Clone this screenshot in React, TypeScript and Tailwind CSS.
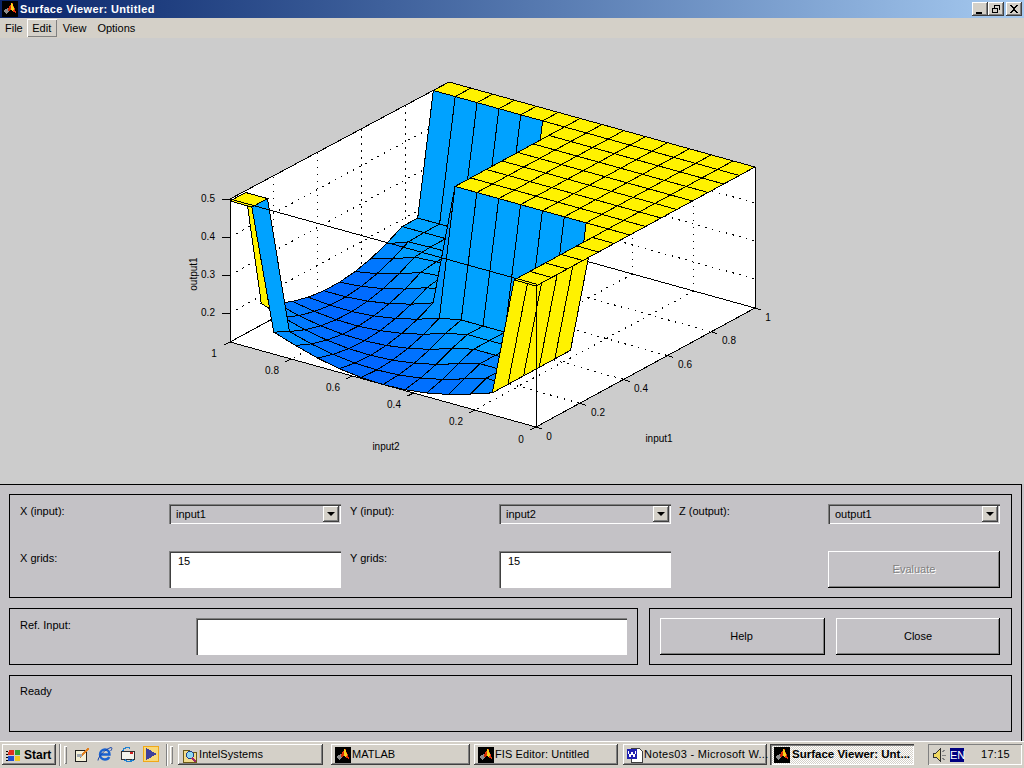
import { type ReactNode } from "react";

const raised = "shadow-[inset_-1px_-1px_0_#000,inset_1px_1px_0_#fff,inset_-2px_-2px_0_#808080]";
const sunken = "shadow-[inset_1px_1px_0_#808080,inset_2px_2px_0_#404040,inset_-1px_-1px_0_#fff]";
const taskRaised = "shadow-[inset_-1px_-1px_0_#404040,inset_1px_1px_0_#fff,inset_-2px_-2px_0_#808080]";

const BOX_TOP = 143;
const SURFACE_TOP = 141;

function point(i: number, j: number, h: number) {
  return [536 + (219 * i) / 14 - (306 * j) / 14, 427 - (119 * i) / 14 - (85 * j) / 14 - h];
}

function isHigh(i: number, j: number) {
  return i >= 13 || j <= 1 || (i >= 6 && j <= 8) || (i <= 1 && j >= 13);
}

function height(i: number, j: number) {
  if (isHigh(i, j)) return SURFACE_TOP;
  const d = j - 7 - 1.08 * i;
  return Math.min(22, 0.92 * d * d);
}

function cellColor(i: number, j: number) {
  if (isHigh(i, j)) return "#fff200";
  let t = height(i, j) / 22;
  // the corner near the yellow wall stays dark in the reference
  if (i <= 2 && j <= 4) t *= 0.5;
  return `rgb(0,${Math.round(102 + t * 60)},255)`;
}

function Surface() {
  const cells: ReactNode[] = [];
  for (let i = 13; i >= 0; i--) {
    for (let j = 13; j >= 0; j--) {
      const pts = [
        point(i, j, height(i, j)),
        point(i + 1, j, height(i + 1, j)),
        point(i + 1, j + 1, height(i + 1, j + 1)),
        point(i, j + 1, height(i, j + 1)),
      ];
      cells.push(
        <polygon
          key={`${i}-${j}`}
          points={pts.map((p) => p.join(",")).join(" ")}
          fill={cellColor(i, j)}
          stroke="#000"
          strokeWidth={1}
        />
      );
    }
  }
  return <g>{cells}</g>;
}

function Dotted({ x1, y1, x2, y2 }: { x1: number; y1: number; x2: number; y2: number }) {
  return <line x1={x1} y1={y1} x2={x2} y2={y2} stroke="#000" strokeWidth={1.2} strokeDasharray="1.5 5.5" />;
}

function Plot() {
  const fractions = [0.2, 0.4, 0.6, 0.8];
  const heights = [29, 67, 105];
  const uv = (u: number, v: number) => point(u * 14, v * 14, 0);
  const labels: [string, number, number][] = [
    ["0.5", 208, 202],
    ["0.4", 208, 240],
    ["0.3", 208, 278],
    ["0.2", 208, 316],
    ["1", 214, 357],
    ["0.8", 272, 374],
    ["0.6", 333, 391],
    ["0.4", 394, 408],
    ["0.2", 456, 425],
    ["0", 521, 443],
    ["0", 549, 440],
    ["0.2", 598, 416],
    ["0.4", 641, 392],
    ["0.6", 685, 368],
    ["0.8", 729, 344],
    ["1", 768, 321],
    ["input2", 386, 450],
    ["input1", 659, 442],
  ];
  return (
    <svg viewBox="0 38 1024 446" className="block w-[1024px] h-[446px]">
      <g shapeRendering="crispEdges">
        <polygon points="230,199 449,82 755,167 755,308 536,427 230,342" fill="#fff" />
        {fractions.map((f) => {
          const [ax, ay] = uv(f, 1);
          const [bx, by] = uv(1, f);
          const [cx, cy] = uv(f, 0);
          const [dx, dy] = uv(0, f);
          return (
            <g key={f}>
              <Dotted x1={ax} y1={ay} x2={ax} y2={ay - BOX_TOP} />
              <Dotted x1={bx} y1={by} x2={bx} y2={by - SURFACE_TOP} />
              <Dotted x1={ax} y1={ay} x2={cx} y2={cy} />
              <Dotted x1={bx} y1={by} x2={dx} y2={dy} />
            </g>
          );
        })}
        {heights.map((h) => (
          <g key={h}>
            <Dotted x1={230} y1={342 - h} x2={449} y2={223 - h} />
            <Dotted x1={449} y1={223 - h} x2={755} y2={308 - h} />
          </g>
        ))}
        <g fill="none" stroke="#000">
          <path d="M230 199L449 82L755 167V308M230 199V342L449 223L755 308L536 427L230 342M449 82V223" />
        </g>
        <Surface />
        <g fill="none" stroke="#000">
          <path d="M230 199L536 284V427M536 286L755 167" />
          {[199, 237, 275, 313].map((y) => (
            <path key={y} d={`M222 ${y}H230`} />
          ))}
          {[0, 0.2, 0.4, 0.6, 0.8, 1].map((f) => {
            const [vx, vy] = uv(0, f);
            const [ux, uy] = uv(f, 0);
            return (
              <g key={f}>
                <path d={`M${vx} ${vy}l-6 3`} />
                <path d={`M${ux} ${uy}l6 2`} />
              </g>
            );
          })}
        </g>
      </g>
      <g fontFamily="Liberation Sans, Arial, sans-serif" fontSize={10} fill="#000" textAnchor="middle">
        {labels.map(([text, x, y]) => (
          <text key={`${text}-${x}`} x={x} y={y}>
            {text}
          </text>
        ))}
        <text x={0} y={0} transform="translate(197 274) rotate(-90)">
          output1
        </text>
      </g>
    </svg>
  );
}

function MatlabIcon() {
  return (
    <svg viewBox="0 0 16 16" className="w-4 h-4 shrink-0" shapeRendering="crispEdges">
      <rect width="16" height="16" fill="#000" />
      <polygon points="1,10 6,7 8,10 4,13" fill="#8c8c8c" />
      <polygon points="6,8 10,1 13,8 15,14 12,11 9,9" fill="#e8350a" />
      <polygon points="9,3 10,1 12,7 11,11 9,8" fill="#f6d21a" />
      <polygon points="6,8 9,6 7,11" fill="#c42a0a" />
    </svg>
  );
}

function WinButton({ children }: { children: ReactNode }) {
  return (
    <div className={`w-4 h-[14px] bg-[#d4d0c8] flex items-center justify-center ${taskRaised}`}>
      <svg viewBox="0 0 16 14" className="w-4 h-[14px]" shapeRendering="crispEdges">
        {children}
      </svg>
    </div>
  );
}

function TitleBar() {
  return (
    <div className="h-[18px] flex items-center bg-gradient-to-r from-[#0a246a] to-[#a6caf0]">
      <div className="ml-[2px] mr-[2px]">
        <MatlabIcon />
      </div>
      <span className="text-white font-bold text-[11px] tracking-[0.35px] leading-[18px]">Surface Viewer: Untitled</span>
      <div className="ml-auto mr-[2px] flex">
        <WinButton>
          <path d="M4 10h6v2H4z" fill="#000" />
        </WinButton>
        <WinButton>
          <path d="M6 3h6v1h-6zM6 4h1v2H6zM11 4h1v4h-1zM4 6h6v1H4zM4 7h1v4H4zM9 7h1v4H9zM4 10h6v1H4z" fill="#000" />
        </WinButton>
        <div className="w-[2px]" />
        <WinButton>
          <path d="M4 3h2v1h1v1h2V4h1V3h2v1h-1v1h-1v1h-1v2h1v1h1v1h1v1h-2v-1H9V9H7v1H6v1H4v-1h1V9h1V8h1V6H6V5H5V4H4z" fill="#000" />
        </WinButton>
      </div>
    </div>
  );
}

function MenuBar() {
  return (
    <div className="h-5 bg-[#d4d0c8] flex items-center text-[11px] text-black">
      <span className="ml-[5px]">File</span>
      <span className="ml-[4px] w-[30px] h-[18px] flex items-center justify-center shadow-[inset_1px_1px_0_#fff,inset_-1px_-1px_0_#808080]">
        Edit
      </span>
      <span className="ml-[6px]">View</span>
      <span className="ml-[11px]">Options</span>
    </div>
  );
}

function Label({ width, children }: { width: string; children: ReactNode }) {
  return <span className={`${width} shrink-0 pt-[1px] text-[11px] leading-[13px]`}>{children}</span>;
}

function Select({ value }: { value: string }) {
  return (
    <div className={`relative w-[172px] h-5 bg-[#c4c2c6] flex items-center pl-[7px] pt-[1px] text-[11px] ${sunken}`}>
      {value}
      <div className={`absolute right-[2px] top-[2px] w-4 h-4 bg-[#d4d0c8] flex items-center justify-center ${taskRaised}`}>
        <div className="w-0 h-0 border-x-4 border-t-4 border-x-transparent border-t-black" />
      </div>
    </div>
  );
}

function EditBox({ className, value }: { className: string; value?: string }) {
  return (
    <div className={`h-[37px] bg-white pl-[9px] pt-[4px] text-[11px] leading-[13px] ${sunken} ${className}`}>{value}</div>
  );
}

function PushButton({ className, children }: { className: string; children: ReactNode }) {
  return (
    <div className={`h-[37px] flex items-center justify-center text-[11px] ${raised} ${className}`}>{children}</div>
  );
}

function ControlPanel() {
  return (
    <div className="h-[257px] bg-[#c4c2c6] text-black">
      <div className="w-[1022px] h-full border-t border-r border-black pt-[9px] pl-[9px] pr-[9px] flex flex-col gap-[10px]">
        <div className="h-[104px] border border-black pt-[9px] pl-[10px]">
          <div className="flex">
            <Label width="w-[149px]">X (input):</Label>
            <Select value="input1" />
            <Label width="ml-[9px] w-[149px]">Y (input):</Label>
            <Select value="input2" />
            <Label width="ml-[8px] w-[149px]">Z (output):</Label>
            <Select value="output1" />
          </div>
          <div className="flex mt-[27px]">
            <Label width="w-[149px]">X grids:</Label>
            <EditBox className="w-[172px]" value="15" />
            <Label width="ml-[9px] w-[149px]">Y grids:</Label>
            <EditBox className="w-[172px]" value="15" />
            <div className="ml-[157px]">
              <PushButton className="w-[172px] text-[#808080] [text-shadow:1px_1px_0_#fff]">Evaluate</PushButton>
            </div>
          </div>
        </div>
        <div className="flex gap-[11px] h-[57px]">
          <div className="w-[629px] border border-black pt-[9px] pl-[10px] flex">
            <Label width="w-[176px]">Ref. Input:</Label>
            <EditBox className="w-[431px]" />
          </div>
          <div className="flex-1 border border-black pt-[9px] pl-[10px] flex gap-[11px]">
            <PushButton className="w-[165px] pr-[2px]">Help</PushButton>
            <PushButton className="w-[164px]">Close</PushButton>
          </div>
        </div>
        <div className="h-[57px] border border-black pt-[9px] pl-[10px] text-[11px] leading-[13px]">Ready</div>
      </div>
    </div>
  );
}

function FolderIcon() {
  return (
    <svg viewBox="0 0 16 16" className="w-4 h-4 shrink-0" shapeRendering="crispEdges">
      <path d="M1 3h6l1 2h6v10H1z" fill="#f2dc8c" stroke="#6b5a18" />
      <circle cx="8" cy="8" r="3.5" fill="#8fd8f0" stroke="#1a3f8c" />
      <path d="M10 11l4 4" stroke="#a02a6a" strokeWidth="2" />
    </svg>
  );
}

function WordIcon() {
  return (
    <svg viewBox="0 0 16 16" className="w-4 h-4 shrink-0" shapeRendering="crispEdges">
      <path d="M4 1h8l3 3v11H4z" fill="#fff" stroke="#404040" />
      <rect x="0" y="2" width="10" height="10" fill="#1f1fb0" />
      <path d="M1 4l2 6 2-5 2 5 2-6" fill="none" stroke="#fff" />
    </svg>
  );
}

function TaskButton({ className, icon, children }: { className: string; icon: ReactNode; children: ReactNode }) {
  return (
    <div className={`h-[21px] bg-[#d4d0c8] flex items-center pl-[4px] gap-[1px] text-[11px] whitespace-nowrap ${taskRaised} ${className}`}>
      {icon}
      {children}
    </div>
  );
}

function Handle({ className }: { className: string }) {
  return <div className={`w-[3px] h-[18px] shadow-[inset_1px_1px_0_#fff,inset_-1px_-1px_0_#808080] ${className}`} />;
}

function Divider({ className }: { className: string }) {
  return <div className={`w-[2px] h-[22px] shadow-[inset_1px_0_0_#808080,inset_-1px_0_0_#fff] ${className}`} />;
}

function QuickLaunch() {
  return (
    <div className="flex items-center gap-[7px]">
      <svg viewBox="0 0 16 16" className="w-4 h-4" shapeRendering="crispEdges">
        <rect x="1" y="4" width="11" height="11" fill="#f4f0d8" stroke="#202020" />
        <path d="M5 11L14 1l1 2-8 9z" fill="#e08020" />
        <path d="M3 8h5v3H3z" fill="#a0a8b0" />
      </svg>
      <svg viewBox="0 0 16 16" className="w-4 h-4">
        <path d="M3 8.5h9.5C12.5 5.5 10.5 3.5 8 3.5S3 5.5 3 8.5s2.2 5 5 5c2 0 3.5-1 4.2-2.5" fill="none" stroke="#1a62d0" strokeWidth="2.4" />
        <path d="M1 14.5C1 11 8 3 14 1.5c1.5 0 1 2-.5 3.5" fill="none" stroke="#1844a8" strokeWidth="1" />
      </svg>
      <svg viewBox="0 0 16 16" className="w-4 h-4" shapeRendering="crispEdges">
        <rect x="1" y="5" width="13" height="8" fill="#f4f4ec" stroke="#303030" />
        <rect x="10" y="6" width="3" height="2" fill="#d02020" />
        <path d="M3 5c0-3 4-4 7-3M13 14c-2 2-6 2-8 0" fill="none" stroke="#2080d0" strokeWidth="1.5" />
      </svg>
      <svg viewBox="0 0 16 16" className="w-4 h-4" shapeRendering="crispEdges">
        <rect width="16" height="16" fill="#f0a818" />
        <rect x="1" y="1" width="14" height="14" fill="#f8d878" />
        <polygon points="3,2 14,8 3,14" fill="#40409c" />
      </svg>
    </div>
  );
}

function TaskBar() {
  return (
    <div className="h-[27px] bg-[#d4d0c8] border-t border-white pt-[2px] flex items-start text-black">
      <div className={`ml-[2px] w-[54px] h-[21px] flex items-center pl-[4px] gap-[2px] text-[12px] font-bold ${taskRaised}`}>
        <svg viewBox="0 0 16 16" className="w-4 h-4 shrink-0" shapeRendering="crispEdges">
          <path d="M3 3h5v5H2z" fill="#e03020" />
          <path d="M9 3h5v5H9z" fill="#30a030" />
          <path d="M2 9h6v5H2z" fill="#2050d0" />
          <path d="M9 9h5v5H9z" fill="#f0c820" />
          <path d="M0 4h2M0 7h2M0 10h2M0 13h2" stroke="#000" />
        </svg>
        Start
      </div>
      <Divider className="ml-[3px]" />
      <Handle className="ml-[3px] mt-[2px]" />
      <div className="ml-[7px] mt-[2px]">
        <QuickLaunch />
      </div>
      <Divider className="ml-[7px]" />
      <Handle className="ml-[2px] mt-[2px]" />
      <TaskButton className="ml-[5px] w-[145px] tracking-[0.1px]" icon={<FolderIcon />}>IntelSystems</TaskButton>
      <TaskButton className="ml-[8px] w-[139px]" icon={<MatlabIcon />}>MATLAB</TaskButton>
      <TaskButton className="ml-[4px] w-[144px] tracking-[0.1px]" icon={<MatlabIcon />}>FIS Editor: Untitled</TaskButton>
      <TaskButton className="ml-[5px] w-[144px] tracking-[0.3px]" icon={<WordIcon />}>Notes03 - Microsoft W...</TaskButton>
      <div className="ml-[3px] w-[144px] h-[21px] flex items-center pl-[4px] gap-[2px] text-[11.5px] font-bold whitespace-nowrap bg-[repeating-conic-gradient(#fff_0_25%,#d4d0c8_0_50%)] bg-[length:2px_2px] shadow-[inset_1px_1px_0_#404040,inset_2px_2px_0_#808080,inset_-1px_-1px_0_#fff]">
        <MatlabIcon />
        Surface Viewer: Unt...
      </div>
      <div className="ml-[14px] w-[94px] h-[21px] flex items-center pl-[4px] text-[11px] shadow-[inset_1px_1px_0_#808080,inset_-1px_-1px_0_#fff]">
        <svg viewBox="0 0 16 16" className="w-4 h-4 shrink-0" shapeRendering="crispEdges">
          <path d="M1 6h3l4-4v12l-4-4H1z" fill="#f0d860" stroke="#303030" />
          <path d="M10 8h4M10 5l3-2M10 11l3 2" stroke="#808080" />
        </svg>
        <span className="ml-[2px] w-[14px] h-[14px] bg-[#000080] text-white leading-[14px] text-center">EN</span>
        <span className="ml-[17px] tracking-[0.3px]">17:15</span>
      </div>
    </div>
  );
}

export default function App() {
  return (
    <div className="w-[1024px] h-[768px] overflow-hidden flex flex-col font-['Liberation_Sans',Arial,sans-serif]">
      <TitleBar />
      <MenuBar />
      <div className="h-[446px] bg-[#cccccc]">
        <Plot />
      </div>
      <ControlPanel />
      <TaskBar />
    </div>
  );
}
